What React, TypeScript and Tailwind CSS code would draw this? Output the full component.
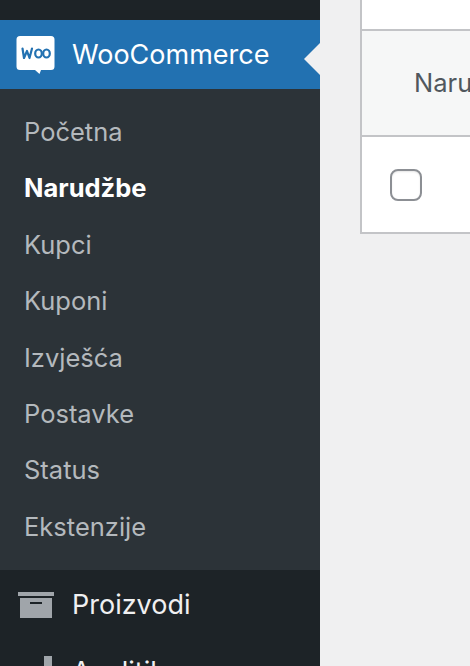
const items = ["Početna", "Narudžbe", "Kupci", "Kuponi", "Izvješća", "Postavke", "Status", "Ekstenzije"];

function WooIcon() {
  return (
    <svg width="40" height="40" viewBox="0 0 40 40" className="shrink-0">
      <path d="M4 1h31a3.500 3.500 0 0 1 3.500 3.500v27a3.500 3.500 0 0 1-3.500 3.500H25l-1.500 4-4.500-4H4a3.500 3.500 0 0 1-3.500-3.500v-27A3.500 3.500 0 0 1 4 1z" fill="#fff" />
      <path d="M6.500 13.500l1.500 9.500 3-7 2.500 7 2.500-9.500" fill="none" stroke="#2271b1" strokeWidth="2.200" strokeLinecap="round" strokeLinejoin="round" />
      <ellipse cx="22.500" cy="18.500" rx="3.300" ry="4" fill="none" stroke="#2271b1" strokeWidth="2.200" />
      <ellipse cx="30.500" cy="18.500" rx="3.300" ry="4" fill="none" stroke="#2271b1" strokeWidth="2.200" />
    </svg>
  );
}

function ArchiveIcon() {
  return (
    <svg width="36" height="26" viewBox="0 0 36 26" className="shrink-0 ml-[18px]">
      <rect x="0" y="0" width="36" height="4" fill="#a0a5aa" />
      <path d="M2 6h32v20H2z M12 10v2h12v-2z" fillRule="evenodd" fill="#a0a5aa" />
    </svg>
  );
}

export default function App() {
  return (
    <div className="w-[470px] h-[666px] overflow-hidden flex bg-[#f0f0f1] font-['Inter',sans-serif]">
      <aside className="w-[320px] shrink-0 bg-[#1d2327] flex flex-col">
        <div className="h-5 shrink-0" />
        <div className="relative h-[69px] shrink-0 bg-[#2271b1] flex items-center pl-4 gap-4 text-white text-[27px]">
          <WooIcon />
          <span className="pt-px">WooCommerce</span>
          <div className="absolute right-0 top-[23px] w-0 h-0 border-y-[16px] border-y-transparent border-r-[16px] border-r-[#f0f0f1]" />
        </div>
        <nav className="bg-[#2c3338] pt-[15px] h-[481px] shrink-0 flex flex-col">
          {items.map((item) => (
            <div
              key={item}
              className={`h-[56.400px] pl-6 flex items-center text-[25.500px] ${item === "Narudžbe" ? "text-white font-bold" : "text-[#b4b9bd]"}`}
            >
              {item}
            </div>
          ))}
        </nav>
        <div className="flex items-center h-[70px] shrink-0 gap-[18px] text-[#f0f0f1] text-[27px]">
          <ArchiveIcon />
          <span>Proizvodi</span>
        </div>
        <div className="flex items-start mt-4 gap-[18px] text-[#f0f0f1] text-[27px]">
          <svg width="36" height="26" viewBox="0 0 36 26" className="shrink-0 ml-[18px]">
            <rect x="26" y="0" width="8" height="26" fill="#a0a5aa" />
          </svg>
          <span className="leading-[32px]">Analitika</span>
        </div>
      </aside>
      <main className="pl-10 flex-1 min-w-0">
        <div className="border-2 border-t-0 border-r-0 border-[#c3c4c7] bg-white w-[200px]">
          <div className="h-[29px]" />
          <div className="h-[108px] border-y-2 border-[#c3c4c7] bg-[#f6f7f7] flex items-center pl-[52px] text-[25.500px] text-[#50575e] overflow-hidden whitespace-nowrap">
            Narudžba
          </div>
          <div className="h-[95px] pl-[28px] flex items-center">
            <div className="w-8 h-8 rounded-lg border-2 border-[#8c8f94] bg-white shadow-[inset_0_1px_2px_rgba(0,0,0,0.1)]" />
          </div>
        </div>
      </main>
    </div>
  );
}
